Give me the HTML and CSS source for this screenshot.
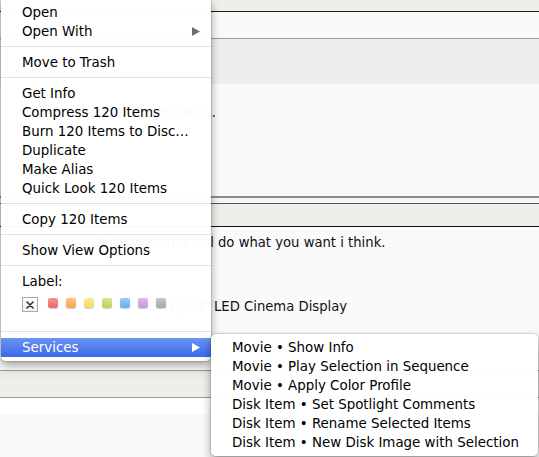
FILE: index.html
```html
<!DOCTYPE html>
<html>
<head>
<meta charset="utf-8">
<link rel="stylesheet" href="styles.css">
</head>
<body>
<div class="page">
  <div class="band-top"></div>
  <div class="row-a"></div>
  <div class="row-b"></div>
  <div class="post post1">
    <div class="line"><span class="lead w216">in any order you wish.</span></div>
  </div>
  <div class="split"></div>
  <div class="band-beige"></div>
  <div class="post post2">
    <div class="line"><span class="lead w214">a service that will</span><span class="rest gap4">do what you want i think.</span></div>
    <div class="line line-sig"><span class="lead w211">2.4 GHz | 24"</span><span class="rest gap3">LED Cinema Display</span></div>
  </div>
  <div class="band-foot"></div>
  <div class="white-strip"></div>
  <div class="rest-area"></div>
</div>

<div class="menu">
  <div class="item">Open</div>
  <div class="item has-sub">Open With<svg class="arrow" width="8" height="9" viewBox="0 0 8 9"><polygon points="0,0 8,4.5 0,9" fill="#707070"/></svg></div>
  <div class="sep"></div>
  <div class="item">Move to Trash</div>
  <div class="sep"></div>
  <div class="item">Get Info</div>
  <div class="item">Compress 120 Items</div>
  <div class="item">Burn 120 Items to Disc…</div>
  <div class="item">Duplicate</div>
  <div class="item">Make Alias</div>
  <div class="item">Quick Look 120 Items</div>
  <div class="sep"></div>
  <div class="item">Copy 120 Items</div>
  <div class="sep"></div>
  <div class="item">Show View Options</div>
  <div class="sep"></div>
  <div class="item">Label:</div>
  <div class="labels">
    <span class="nolabel"><svg width="8" height="8" viewBox="0 0 8 8"><path d="M1 1 L7 7 M7 1 L1 7" stroke="#333" stroke-width="1.6" stroke-linecap="round"/></svg></span>
    <span class="sw red"></span>
    <span class="sw orange"></span>
    <span class="sw yellow"></span>
    <span class="sw green"></span>
    <span class="sw blue"></span>
    <span class="sw purple"></span>
    <span class="sw gray"></span>
  </div>
  <div class="sep"></div>
  <div class="item has-sub active">Services<svg class="arrow" width="8" height="9" viewBox="0 0 8 9"><polygon points="0,0 8,4.5 0,9" fill="#ffffff"/></svg></div>
</div>

<div class="submenu">
  <div class="item">Movie • Show Info</div>
  <div class="item">Movie • Play Selection in Sequence</div>
  <div class="item">Movie • Apply Color Profile</div>
  <div class="item">Disk Item • Set Spotlight Comments</div>
  <div class="item">Disk Item • Rename Selected Items</div>
  <div class="item">Disk Item • New Disk Image with Selection</div>
</div>
</body>
</html>
```

FILE: styles.css
```css
html, body {
  margin: 0;
  padding: 0;
}
body {
  background: #fafafa;
  font-family: "DejaVu Sans", Verdana, sans-serif;
  overflow: hidden;
  width: 539px;
  height: 457px;
  position: relative;
}
.page {
  display: flex;
  flex-direction: column;
}
.band-top {
  height: 11px;
  background: #efeee9;
  border-bottom: 1px solid #1a1a1a;
}
.row-a {
  height: 26px;
  background: #fafafa;
  border-bottom: 1px solid #9a9a9a;
}
.row-b {
  height: 45px;
  background: #eeeeee;
}
.post {
  background: #fafafa;
  color: #111;
  font-size: 13.2px;
  line-height: 16px;
}
.post1 {
  height: 91px;
  padding-top: 21px;
}
.line {
  display: flex;
  white-space: nowrap;
}
.lead {
  display: flex;
  justify-content: flex-end;
  flex: none;
}
.w216 { width: 216px; }
.w214 { width: 214px; }
.w211 { width: 211px; }
.gap4 { margin-left: 4px; }
.gap3 { margin-left: 3px; }
.split {
  border-top: 2px solid #8c8c8c;
  height: 5px;
  background: #f6f6f6;
  border-bottom: 1px solid #555;
}
.band-beige {
  height: 22px;
  background: #efeee9;
  border-bottom: 1px solid #111;
}
.post2 {
  height: 135px;
  padding-top: 8px;
}
.line-sig {
  margin-top: 48px;
}
.band-foot {
  border-top: 1px solid #999;
  height: 26px;
  background: linear-gradient(#e9e8e3, #efeee9 40%, #efeee9);
  border-bottom: 1px solid #999;
}
.white-strip {
  height: 16px;
  background: #ffffff;
}
.rest-area {
  height: 60px;
  background: #fafafa;
}

/* context menu */
.menu {
  position: absolute;
  left: 1px;
  top: 0;
  width: 210px;
  padding: 3px 0 4px;
  background: rgba(255, 255, 255, 0.975);
  border-radius: 0 0 5px 5px;
  box-shadow: 0 4px 10px rgba(0, 0, 0, 0.38), 0 0 0 1px rgba(0, 0, 0, 0.1);
  font-family: "DejaVu Sans", "Lucida Grande", sans-serif;
  font-size: 13.4px;
  color: #000;
}
.item {
  height: 19px;
  line-height: 19px;
  padding-left: 21px;
  padding-right: 11px;
  white-space: nowrap;
  display: flex;
  align-items: center;
}
.has-sub {
  justify-content: space-between;
}
.active {
  background: linear-gradient(#6b94f4, #3a69e8);
  color: #fff;
}
.sep {
  height: 1px;
  margin: 5px 0 6px;
  background: #e1e1e1;
}
.labels {
  height: 35px;
  padding-left: 21px;
  display: flex;
  align-items: flex-start;
  gap: 8px;
  box-sizing: border-box;
}
.nolabel {
  margin-top: 6px;
  margin-right: 2px;
  width: 14px;
  height: 13px;
  border: 1px solid #a8a8a8;
  background: linear-gradient(#ffffff, #f1f1f1);
  display: flex;
  align-items: center;
  justify-content: center;
}
.sw {
  margin-top: 7px;
  width: 10px;
  height: 10px;
  border-radius: 2px;
  box-shadow: 0 1px 1px rgba(0, 0, 0, 0.18);
}
.red { background: linear-gradient(#f99494, #e86868); }
.orange { background: linear-gradient(#ffc47f, #f5a555); }
.yellow { background: linear-gradient(#fbed90, #f0d865); }
.green { background: linear-gradient(#d3e88a, #b8d363); }
.blue { background: linear-gradient(#98cbf8, #6aaeef); }
.purple { background: linear-gradient(#dcb9ec, #c597dc); }
.gray { background: linear-gradient(#c6c6c6, #a8a8a8); }

.submenu {
  position: absolute;
  left: 211px;
  top: 334px;
  width: 327px;
  padding: 4px 0;
  background: rgba(255, 255, 255, 0.96);
  border-radius: 5px;
  box-shadow: 0 4px 10px rgba(0, 0, 0, 0.38), 0 0 0 1px rgba(0, 0, 0, 0.1);
  font-family: "DejaVu Sans", "Lucida Grande", sans-serif;
  font-size: 13.4px;
  color: #000;
}
```
